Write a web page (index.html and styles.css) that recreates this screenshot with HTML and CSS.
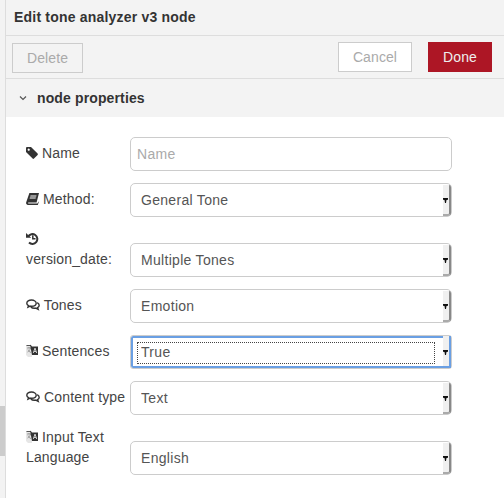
FILE: index.html
```html
<!DOCTYPE html>
<html lang="en">
<head>
  <meta charset="UTF-8">
  <title>Edit tone analyzer v3 node</title>
  <link rel="stylesheet" href="styles.css">
</head>
<body>
  <div class="grip"></div>
  <div class="tray">
    <div class="tray-title">Edit tone analyzer v3 node</div>
    <div class="tray-toolbar">
      <button class="btn btn-delete" type="button">Delete</button>
      <span class="toolbar-right">
        <button class="btn" type="button">Cancel</button>
        <button class="btn btn-primary" type="button">Done</button>
      </span>
    </div>
    <div class="section-header">
      <svg class="chevron" width="8" height="6" viewBox="0 0 8 6"><path d="M1 1.5 4 4.5 7 1.5" fill="none" stroke="#555" stroke-width="1.2"/></svg>
      node properties
    </div>
    <form class="form">
      <div class="form-row">
        <label>
          <svg class="icon" width="12" height="12" viewBox="0 0 12 12"><path d="M0 1.2C0 .5.5 0 1.2 0H5l6.6 6.6c.4.4.4 1 0 1.4l-3.6 3.6c-.4.4-1 .4-1.4 0L0 5ZM2.700 1.600a1.100 1.100 0 1 0 .01 0Z" fill="#333" fill-rule="evenodd"/></svg>
          Name
        </label>
        <input class="input" type="text" placeholder="Name">
      </div>
      <div class="form-row">
        <label>
          <svg class="icon icon-book" width="13" height="12" viewBox="0 0 13 12"><path d="M3.400 0H13l-.4 1.400-2 8H2.600C1.900 9.400 1.600 10 2.400 10.500H11.500L12.500 8.500 12.800 9 11.800 12H2C.6 12-.3 10.800.2 9.300ZM4.500 2.400 4.200 3.400H10.200L10.500 2.400ZM3.900 4.500 3.600 5.500H9.600L9.900 4.500Z" fill="#333" fill-rule="evenodd"/></svg>
          Method:
        </label>
        <span class="select"><select><option>General Tone</option></select></span>
      </div>
      <div class="form-row">
        <label>
          <svg class="icon" width="13" height="13" viewBox="0 0 13 13"><path d="M2.200 4.500A4.900 4.900 0 1 1 3 10.500" fill="none" stroke="#333" stroke-width="2"/><path d="M0 1 5.200 5.800H0Z" fill="#333"/><path d="M6.800 3.200V6.800H9.500" fill="none" stroke="#333" stroke-width="1.500"/></svg>
          <br>version_date:
        </label>
        <span class="select"><select><option>Multiple Tones</option></select></span>
      </div>
      <div class="form-row">
        <label>
          <svg class="icon" width="14" height="12" viewBox="0 0 14 12"><g fill="none" stroke="#333" stroke-width="1.400"><path d="M5.500 1C2.900 1 .8 2.400.8 4.200c0 1 .7 1.900 1.700 2.500L2 8.200l2.200-1.100c.4.100.9.100 1.300.100 2.600 0 4.700-1.300 4.700-3S8.100 1 5.500 1Z"/><path d="M11.200 3.600c1.200.6 2 1.500 2 2.600 0 1-.6 1.800-1.600 2.400l.6 1.800-2.400-1.300c-.5.100-1 .1-1.400.1-1.500 0-2.800-.5-3.600-1.300"/></g></svg>
          Tones
        </label>
        <span class="select"><select><option>Emotion</option></select></span>
      </div>
      <div class="form-row">
        <label>
          <svg class="icon icon-lang" width="12" height="14" viewBox="0 0 12 14"><path d="M0 1H6V13H2L0 11Z" fill="#e6e6e6"/><path d="M.5 1.500H5" stroke="#555" fill="none"/><path d="M1 4H5M3 3V4M1.500 8C3 7.500 4 6 4.500 4M2 5.500C2.500 7 3.500 8 5 8.500" fill="none" stroke="#888" stroke-width=".8"/><path d="M4 .5 6 2.500H12V11H6Z" fill="#333"/><path d="M7.300 9 9 4 10.700 9M8 7.500H10" fill="none" stroke="#ccc"/></svg>
          Sentences
        </label>
        <span class="select select-focus"><select><option>True</option></select><span class="focus-ring"></span></span>
      </div>
      <div class="form-row">
        <label>
          <svg class="icon" width="14" height="12" viewBox="0 0 14 12"><g fill="none" stroke="#333" stroke-width="1.400"><path d="M5.500 1C2.900 1 .8 2.400.8 4.200c0 1 .7 1.900 1.700 2.500L2 8.200l2.200-1.100c.4.100.9.100 1.300.100 2.600 0 4.700-1.300 4.700-3S8.100 1 5.500 1Z"/><path d="M11.200 3.600c1.200.6 2 1.500 2 2.600 0 1-.6 1.800-1.600 2.400l.6 1.800-2.400-1.300c-.5.100-1 .1-1.400.1-1.500 0-2.800-.5-3.600-1.300"/></g></svg>
          Content type
        </label>
        <span class="select"><select><option>Text</option></select></span>
      </div>
      <div class="form-row">
        <label>
          <svg class="icon icon-lang" width="12" height="14" viewBox="0 0 12 14"><path d="M0 1H6V13H2L0 11Z" fill="#e6e6e6"/><path d="M.5 1.500H5" stroke="#555" fill="none"/><path d="M1 4H5M3 3V4M1.500 8C3 7.500 4 6 4.500 4M2 5.500C2.500 7 3.500 8 5 8.500" fill="none" stroke="#888" stroke-width=".8"/><path d="M4 .5 6 2.500H12V11H6Z" fill="#333"/><path d="M7.300 9 9 4 10.700 9M8 7.500H10" fill="none" stroke="#ccc"/></svg>
          Input Text Language
        </label>
        <span class="select"><select><option>English</option></select></span>
      </div>
    </form>
  </div>
</body>
</html>
```

FILE: styles.css
```css
html, body {
  height: 100%;
}
body {
  margin: 0;
  display: flex;
  font-family: "Liberation Sans", Arial, sans-serif;
  font-size: 14px;
  line-height: 20px;
  color: #444;
  background: #f3f3f3;
  overflow: hidden;
}
.grip {
  width: 5px;
  flex: none;
  margin-top: 406px;
  height: 50px;
  background: #ccc;
}
.tray {
  flex: 1;
  border-left: 1px solid #ddd;
  background: #fff;
  min-width: 0;
}
.tray-title {
  height: 28px;
  padding: 7px 0 0 8px;
  font-weight: bold;
  letter-spacing: .2px;
  color: #333;
  background: #f3f3f3;
  border-bottom: 1px solid #ddd;
}
.tray-toolbar {
  display: flex;
  justify-content: space-between;
  align-items: center;
  height: 42px;
  padding: 0 12px 0 6px;
  background: #f3f3f3;
  border-bottom: 1px solid #ddd;
}
.toolbar-right {
  display: flex;
  gap: 16px;
  margin-top: -1px;
}
.btn {
  height: 30px;
  width: 74px;
  padding: 0;
  font: inherit;
  letter-spacing: .1px;
  color: #aaa;
  background: #fff;
  border: 1px solid #ccc;
}
.btn-delete {
  width: 71px;
  margin-top: 1px;
  background: #f3f3f3;
}
.btn-primary {
  width: 64px;
  color: #eee;
  background: #ad1625;
  border-color: #ad1625;
}
.section-header {
  display: flex;
  align-items: center;
  gap: 10px;
  height: 38px;
  padding: 0 0 0 13px;
  font-weight: bold;
  letter-spacing: .13px;
  color: #333;
  background: #f3f3f3;
}
.form {
  padding: 20px 52px 0 20px;
  display: flex;
  flex-direction: column;
  gap: 12px;
}
.form-row {
  display: flex;
  align-items: flex-end;
}
.form-row label {
  width: 104px;
  flex: none;
  padding-bottom: 8px;
  letter-spacing: .15px;
}
.icon {
  vertical-align: -1px;
}
.icon-lang {
  vertical-align: -2px;
}
.input, .select select {
  width: 322px;
  height: 34px;
  box-sizing: border-box;
  font: inherit;
  letter-spacing: .3px;
  border: 1px solid #ccc;
  border-radius: 5px;
  background: #fff;
  color: #555;
  outline: none;
}
.input {
  padding: 0 6px;
}
.input::placeholder {
  color: #aaa;
}
.select {
  position: relative;
  display: block;
  width: 322px;
  height: 34px;
}
.select select {
  display: block;
  appearance: none;
  padding: 0 10px;
}
/* native looking arrow strip on the right of the select */
.select::after {
  content: "";
  position: absolute;
  top: 2px;
  right: 1px;
  bottom: 1px;
  width: 6px;
  background: #f0f0f0;
  border-right: 2px solid #888;
  border-bottom: 2px solid #aaa;
  border-radius: 0 2px 3px 0;
  pointer-events: none;
}
.select::before {
  content: "";
  position: absolute;
  z-index: 1;
  top: 15px;
  right: 4px;
  width: 5px;
  height: 5px;
  background: #111;
  clip-path: polygon(0 0, 100% 0, 100% 35%, 70% 40%, 60% 100%, 40% 100%, 30% 40%, 0 35%);
  pointer-events: none;
}
.select-focus select {
  box-shadow: inset 0 0 0 2px #6a9fe3;
  border-radius: 3px;
}
.select-focus::after {
  top: 1px;
  bottom: 1px;
  border-right-color: #6a9fe3;
  border-bottom-color: #6a9fe3;
  border-radius: 0;
}
.focus-ring {
  position: absolute;
  top: 7px;
  left: 7px;
  width: 296px;
  height: 20px;
  border: 1px dotted #444;
  pointer-events: none;
}
```
